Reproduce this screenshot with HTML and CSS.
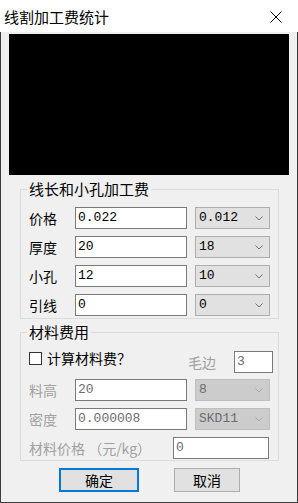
FILE: index.html
```html
<!DOCTYPE html>
<html>
<head>
<meta charset="utf-8">
<link rel="stylesheet" href="styles.css">
</head>
<body>
<div class="window">
  <div class="titlebar">
    <span class="title">线割加工费统计</span>
    <svg class="close" width="12" height="12" viewBox="0 0 12 12"><path d="M0.5 0.5L11.5 11.5M11.5 0.5L0.5 11.5" stroke="#000" stroke-width="1" fill="none"/></svg>
  </div>
  <div class="client">
    <div class="canvas"></div>
    <fieldset class="group g1">
      <legend>线长和小孔加工费</legend>
      <div class="rows">
        <div class="row">
          <span class="lbl">价格</span>
          <div class="input">0.022</div>
          <div class="select"><span>0.012</span><svg class="chev" width="8" height="5" viewBox="0 0 8 5"><polyline points="0.5,0.5 4,4 7.5,0.5" fill="none" stroke="#707070" stroke-width="1"/></svg></div>
        </div>
        <div class="row">
          <span class="lbl">厚度</span>
          <div class="input">20</div>
          <div class="select"><span>18</span><svg class="chev" width="8" height="5" viewBox="0 0 8 5"><polyline points="0.5,0.5 4,4 7.5,0.5" fill="none" stroke="#707070" stroke-width="1"/></svg></div>
        </div>
        <div class="row">
          <span class="lbl">小孔</span>
          <div class="input">12</div>
          <div class="select"><span>10</span><svg class="chev" width="8" height="5" viewBox="0 0 8 5"><polyline points="0.5,0.5 4,4 7.5,0.5" fill="none" stroke="#707070" stroke-width="1"/></svg></div>
        </div>
        <div class="row">
          <span class="lbl">引线</span>
          <div class="input">0</div>
          <div class="select"><span>0</span><svg class="chev" width="8" height="5" viewBox="0 0 8 5"><polyline points="0.5,0.5 4,4 7.5,0.5" fill="none" stroke="#707070" stroke-width="1"/></svg></div>
        </div>
      </div>
    </fieldset>
    <fieldset class="group g2">
      <legend>材料费用</legend>
      <div class="rows2">
        <div class="row r1">
          <label class="check"><span class="box"></span><span>计算材料费？</span></label>
          <span class="lbl dis mb">毛边</span>
          <div class="input small">3</div>
        </div>
        <div class="row r2">
          <span class="lbl dis">料高</span>
          <div class="input disin">20</div>
          <div class="select off"><span>8</span><svg class="chev" width="8" height="5" viewBox="0 0 8 5"><polyline points="0.5,0.5 4,4 7.5,0.5" fill="none" stroke="#a8a8a8" stroke-width="1"/></svg></div>
        </div>
        <div class="row r3">
          <span class="lbl dis">密度</span>
          <div class="input disin">0.000008</div>
          <div class="select off"><span>SKD11</span><svg class="chev" width="8" height="5" viewBox="0 0 8 5"><polyline points="0.5,0.5 4,4 7.5,0.5" fill="none" stroke="#a8a8a8" stroke-width="1"/></svg></div>
        </div>
        <div class="row r4">
          <span class="lbl dis wide">材料价格 （元/kg）</span>
          <div class="input disin price">0</div>
        </div>
      </div>
    </fieldset>
    <div class="buttons">
      <div class="btn ok">确定</div>
      <div class="btn cancel">取消</div>
    </div>
  </div>
</div>
</body>
</html>
```

FILE: styles.css
```css
* { box-sizing: border-box; }
html, body { margin: 0; padding: 0; }
body {
  width: 298px;
  height: 503px;
  overflow: hidden;
  background: #f0f0f0;
  font-family: "Noto Sans CJK SC", "Noto Sans", sans-serif;
  color: #000;
}
.window {
  width: 298px;
  height: 503px;
  display: flex;
  flex-direction: column;
}
.titlebar {
  flex: none;
  height: 32px;
  background: #fff;
  display: flex;
  align-items: center;
  justify-content: space-between;
  padding: 0 16px 0 4px;
}
.title {
  font-size: 15px;
  line-height: 20px;
  margin-top: 1px;
}
.close { display: block; margin-top: 1px; }
.client {
  flex: 1;
  background: #f0f0f0;
  border: 1px solid #3c3c3c;
  border-top: none;
  padding: 2px 8px 0;
  display: flex;
  flex-direction: column;
}
.canvas {
  flex: none;
  height: 141px;
  background: #000;
}
.group {
  margin: 5px 10px 0 11px;
  padding: 0;
  border: 1px solid #dcdcdc;
  min-width: 0;
}
.group legend {
  margin-left: 6px;
  padding: 0 2px;
  font-size: 15px;
  line-height: 18px;
}
.g2 { margin-top: 4px; }
.rows {
  padding: 9px 0 2px 8px;
  display: flex;
  flex-direction: column;
  gap: 7px;
}
.rows2 {
  padding: 10px 5px 1px 8px;
  display: flex;
  flex-direction: column;
}
.row {
  display: flex;
  align-items: center;
  height: 22px;
}
.lbl {
  width: 46px;
  font-size: 14px;
  line-height: 22px;
  flex: none;
}
.dis { color: #a0a0a0; }
.input {
  flex: none;
  width: 112px;
  height: 22px;
  background: #fff;
  border: 1px solid #7a7a7a;
  padding: 0 2px;
  font-family: "Liberation Mono", monospace;
  font-size: 13px;
  line-height: 20px;
  white-space: nowrap;
}
.disin { color: #6d6d6d; }
.select {
  flex: none;
  width: 75px;
  height: 22px;
  margin-left: 8px;
  background: #e1e1e1;
  border: 1px solid #adadad;
  padding: 0 6px 0 3px;
  display: flex;
  align-items: center;
  justify-content: space-between;
  font-family: "Liberation Mono", monospace;
  font-size: 13px;
  line-height: 20px;
}
.select.off {
  background: #cccccc;
  border-color: #bfbfbf;
  color: #6d6d6d;
}
.chev { display: block; }
.r1 { align-items: flex-start; }
.r2 { margin-top: 6px; }
.r3, .r4 { margin-top: 7px; }
.check {
  display: flex;
  align-items: center;
  height: 14px;
  font-size: 14px;
  line-height: 14px;
}
.box {
  width: 13px;
  height: 13px;
  background: #fff;
  border: 1px solid #333;
  margin-right: 5px;
  flex: none;
}
.mb {
  width: auto;
  margin-left: auto;
  margin-right: 18px;
}
.input.small { width: 39px; color: #6d6d6d; }
.wide { width: 144px; }
.input.price { width: 96px; }
.buttons {
  display: flex;
  gap: 35px;
  margin: 7px 0 0 50px;
}
.btn {
  height: 24px;
  background: #e1e1e1;
  border: 1px solid #adadad;
  font-size: 14px;
  line-height: 22px;
  text-align: center;
}
.btn.ok {
  width: 80px;
  border: 2px solid #0078d7;
  line-height: 20px;
}
.btn.cancel { width: 66px; }
```
